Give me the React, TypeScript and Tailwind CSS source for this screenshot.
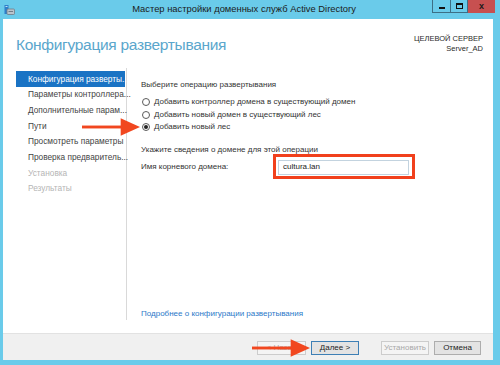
import React from "react";

const navItems = [
  { label: "Конфигурация разверты...", state: "active" },
  { label: "Параметры контроллера...", state: "normal" },
  { label: "Дополнительные парам...", state: "normal" },
  { label: "Пути", state: "normal" },
  { label: "Просмотреть параметры", state: "normal" },
  { label: "Проверка предваритель...", state: "normal" },
  { label: "Установка", state: "disabled" },
  { label: "Результаты", state: "disabled" },
];

const options = [
  { label: "Добавить контроллер домена в существующий домен", checked: false },
  { label: "Добавить новый домен в существующий лес", checked: false },
  { label: "Добавить новый лес", checked: true },
];

function Radio({ checked }: { checked: boolean }) {
  return (
    <span className="mr-[4px] flex h-[8px] w-[8px] items-center justify-center rounded-full border border-[#5a5a5a] bg-white">
      {checked && <span className="h-[4px] w-[4px] rounded-full bg-[#222]" />}
    </span>
  );
}

function Arrow({ className }: { className: string }) {
  // красная стрелка-указатель поверх скриншота
  return (
    <svg className={className} viewBox="0 0 60 20" width="60" height="20">
      <rect x="0" y="8.5" width="44" height="3" fill="#f1471f" />
      <polygon points="40,1 60,10 40,19" fill="#f1471f" />
    </svg>
  );
}

function WizardButton({
  children,
  variant,
  width,
}: {
  children: React.ReactNode;
  variant: "disabled" | "default" | "normal";
  width: string;
}) {
  const styles = {
    disabled: "border-[#cccccc] bg-[#f4f4f4] text-[#a8a8a8]",
    default: "border-[#3d7fb5] bg-[#e3e3e3] text-[#222]",
    normal: "border-[#adadad] bg-[#e3e3e3] text-[#222]",
  };
  return (
    <div
      className={`flex h-[14px] items-center justify-center border text-[8px] ${styles[variant]} ${width}`}
    >
      {children}
    </div>
  );
}

export default function App() {
  return (
    <div
      className="relative flex h-[365px] w-[500px] flex-col overflow-hidden bg-[#6acbea]"
      style={{ fontFamily: '"Liberation Sans", Arial, sans-serif' }}
    >
      {/* заголовок окна */}
      <div className="flex h-[19px] items-start">
        <div className="flex h-[19px] w-[20px] items-center pl-[4px]">
          <svg width="11" height="10" viewBox="0 0 11 10">
            <rect x="0.5" y="0" width="4" height="9" fill="#2f7fc8" />
            <rect x="1.5" y="1" width="2" height="1" fill="#bfe0f7" />
            <rect x="3" y="4" width="7.5" height="5.5" rx="1" fill="#b9c3cc" stroke="#6f7c87" strokeWidth="0.8" />
            <rect x="4.5" y="6" width="4.5" height="1" fill="#6f7c87" />
          </svg>
        </div>
        <div className="flex h-[19px] flex-1 items-center justify-center pl-[36px] text-[9.4px] text-[#1b1b1b]">
          Мастер настройки доменных служб Active Directory
        </div>
        <div className="mr-[5px] flex h-[13px]">
          <div className="flex h-[13px] w-[18px] items-end justify-center border border-r-0 border-t-0 border-[#3d6f86] pb-[3px]">
            <span className="h-[2px] w-[6px] bg-[#111]" />
          </div>
          <div className="flex h-[13px] w-[18px] items-center justify-center border border-t-0 border-[#3d6f86]">
            <span className="h-[6px] w-[7px] border-[1.5px] border-t-[2px] border-[#111]" />
          </div>
          <div className="flex h-[13px] w-[27px] items-center justify-center bg-[#c75050] text-[9px] font-bold leading-none text-[#1a1a1a]">
            x
          </div>
        </div>
      </div>

      {/* тело мастера */}
      <div className="ml-[3px] mr-[7px] flex flex-1 flex-col bg-white">
        <div className="flex h-[49px] items-start justify-between pl-[13px] pr-[10px]">
          <h1 className="mt-[13px] text-[15.5px] leading-[26px] tracking-[-0.3px] text-[#5aa6cc]">
            Конфигурация развертывания
          </h1>
          <div className="mt-[15px] text-right text-[7.5px] leading-[10px] text-[#2a2a2a]">
            <div>ЦЕЛЕВОЙ СЕРВЕР</div>
            <div>Server_AD</div>
          </div>
        </div>

        <div className="flex flex-1 pb-[13px]">
          <div className="h-[252px] w-[124px] border-r border-[#d9d9d9] pl-[13px] pt-[3px]">
            {navItems.map((item) => (
              <div
                key={item.label}
                className={`flex h-[15.7px] items-center whitespace-nowrap pl-[12px] text-[8.3px] ${
                  item.state === "active"
                    ? "mr-[1px] bg-[#1a73c4] text-white"
                    : item.state === "disabled"
                      ? "text-[#b5b5b5]"
                      : "text-[#444]"
                }`}
              >
                {item.label}
              </div>
            ))}
          </div>

          <div className="flex flex-1 flex-col pl-[14px] pt-[11px] text-[8px] text-[#333]">
            <div className="leading-[12px]">Выберите операцию развертывания</div>
            <div className="mt-[5px] flex flex-col">
              {options.map((o) => (
                <div key={o.label} className="flex h-[12.5px] items-center pl-[1px]">
                  <Radio checked={o.checked} />
                  {o.label}
                </div>
              ))}
            </div>
            <div className="mt-[10px] leading-[12px]">Укажите сведения о домене для этой операции</div>
            <div className="mt-[4px] flex items-center">
              <div className="w-[137px]">Имя корневого домена:</div>
              <div className="relative">
                <div className="flex h-[15px] w-[131px] items-center border border-[#c3d3df] pl-[4px] text-[#222]">
                  cultura.lan
                </div>
                <div className="absolute -bottom-[4px] -left-[5px] -right-[6px] -top-[6px] border-[3px] border-[#f1401c]" />
              </div>
            </div>
            <div className="mt-auto leading-[12px] text-[#2a78c8]">
              Подробнее о конфигурации развертывания
            </div>
          </div>
        </div>

        <div className="flex h-[27px] items-start justify-end border-t border-[#e2e2e2] bg-[#f0f0f0] pr-[12px] pt-[7px]">
          <WizardButton variant="disabled" width="w-[49px]">
            &lt; Назад
          </WizardButton>
          <div className="ml-[5px]">
            <WizardButton variant="default" width="w-[48px]">
              Далее &gt;
            </WizardButton>
          </div>
          <div className="ml-[22px]">
            <WizardButton variant="disabled" width="w-[48px]">
              Установить
            </WizardButton>
          </div>
          <div className="ml-[5px]">
            <WizardButton variant="normal" width="w-[47px]">
              Отмена
            </WizardButton>
          </div>
        </div>
      </div>
      <div className="h-[5px]" />

      {/* аннотации поверх окна */}
      <Arrow className="absolute left-[82px] top-[117px] h-[20px] w-[58px]" />
      <Arrow className="absolute left-[252px] top-[338px] h-[20px] w-[58px]" />
    </div>
  );
}
